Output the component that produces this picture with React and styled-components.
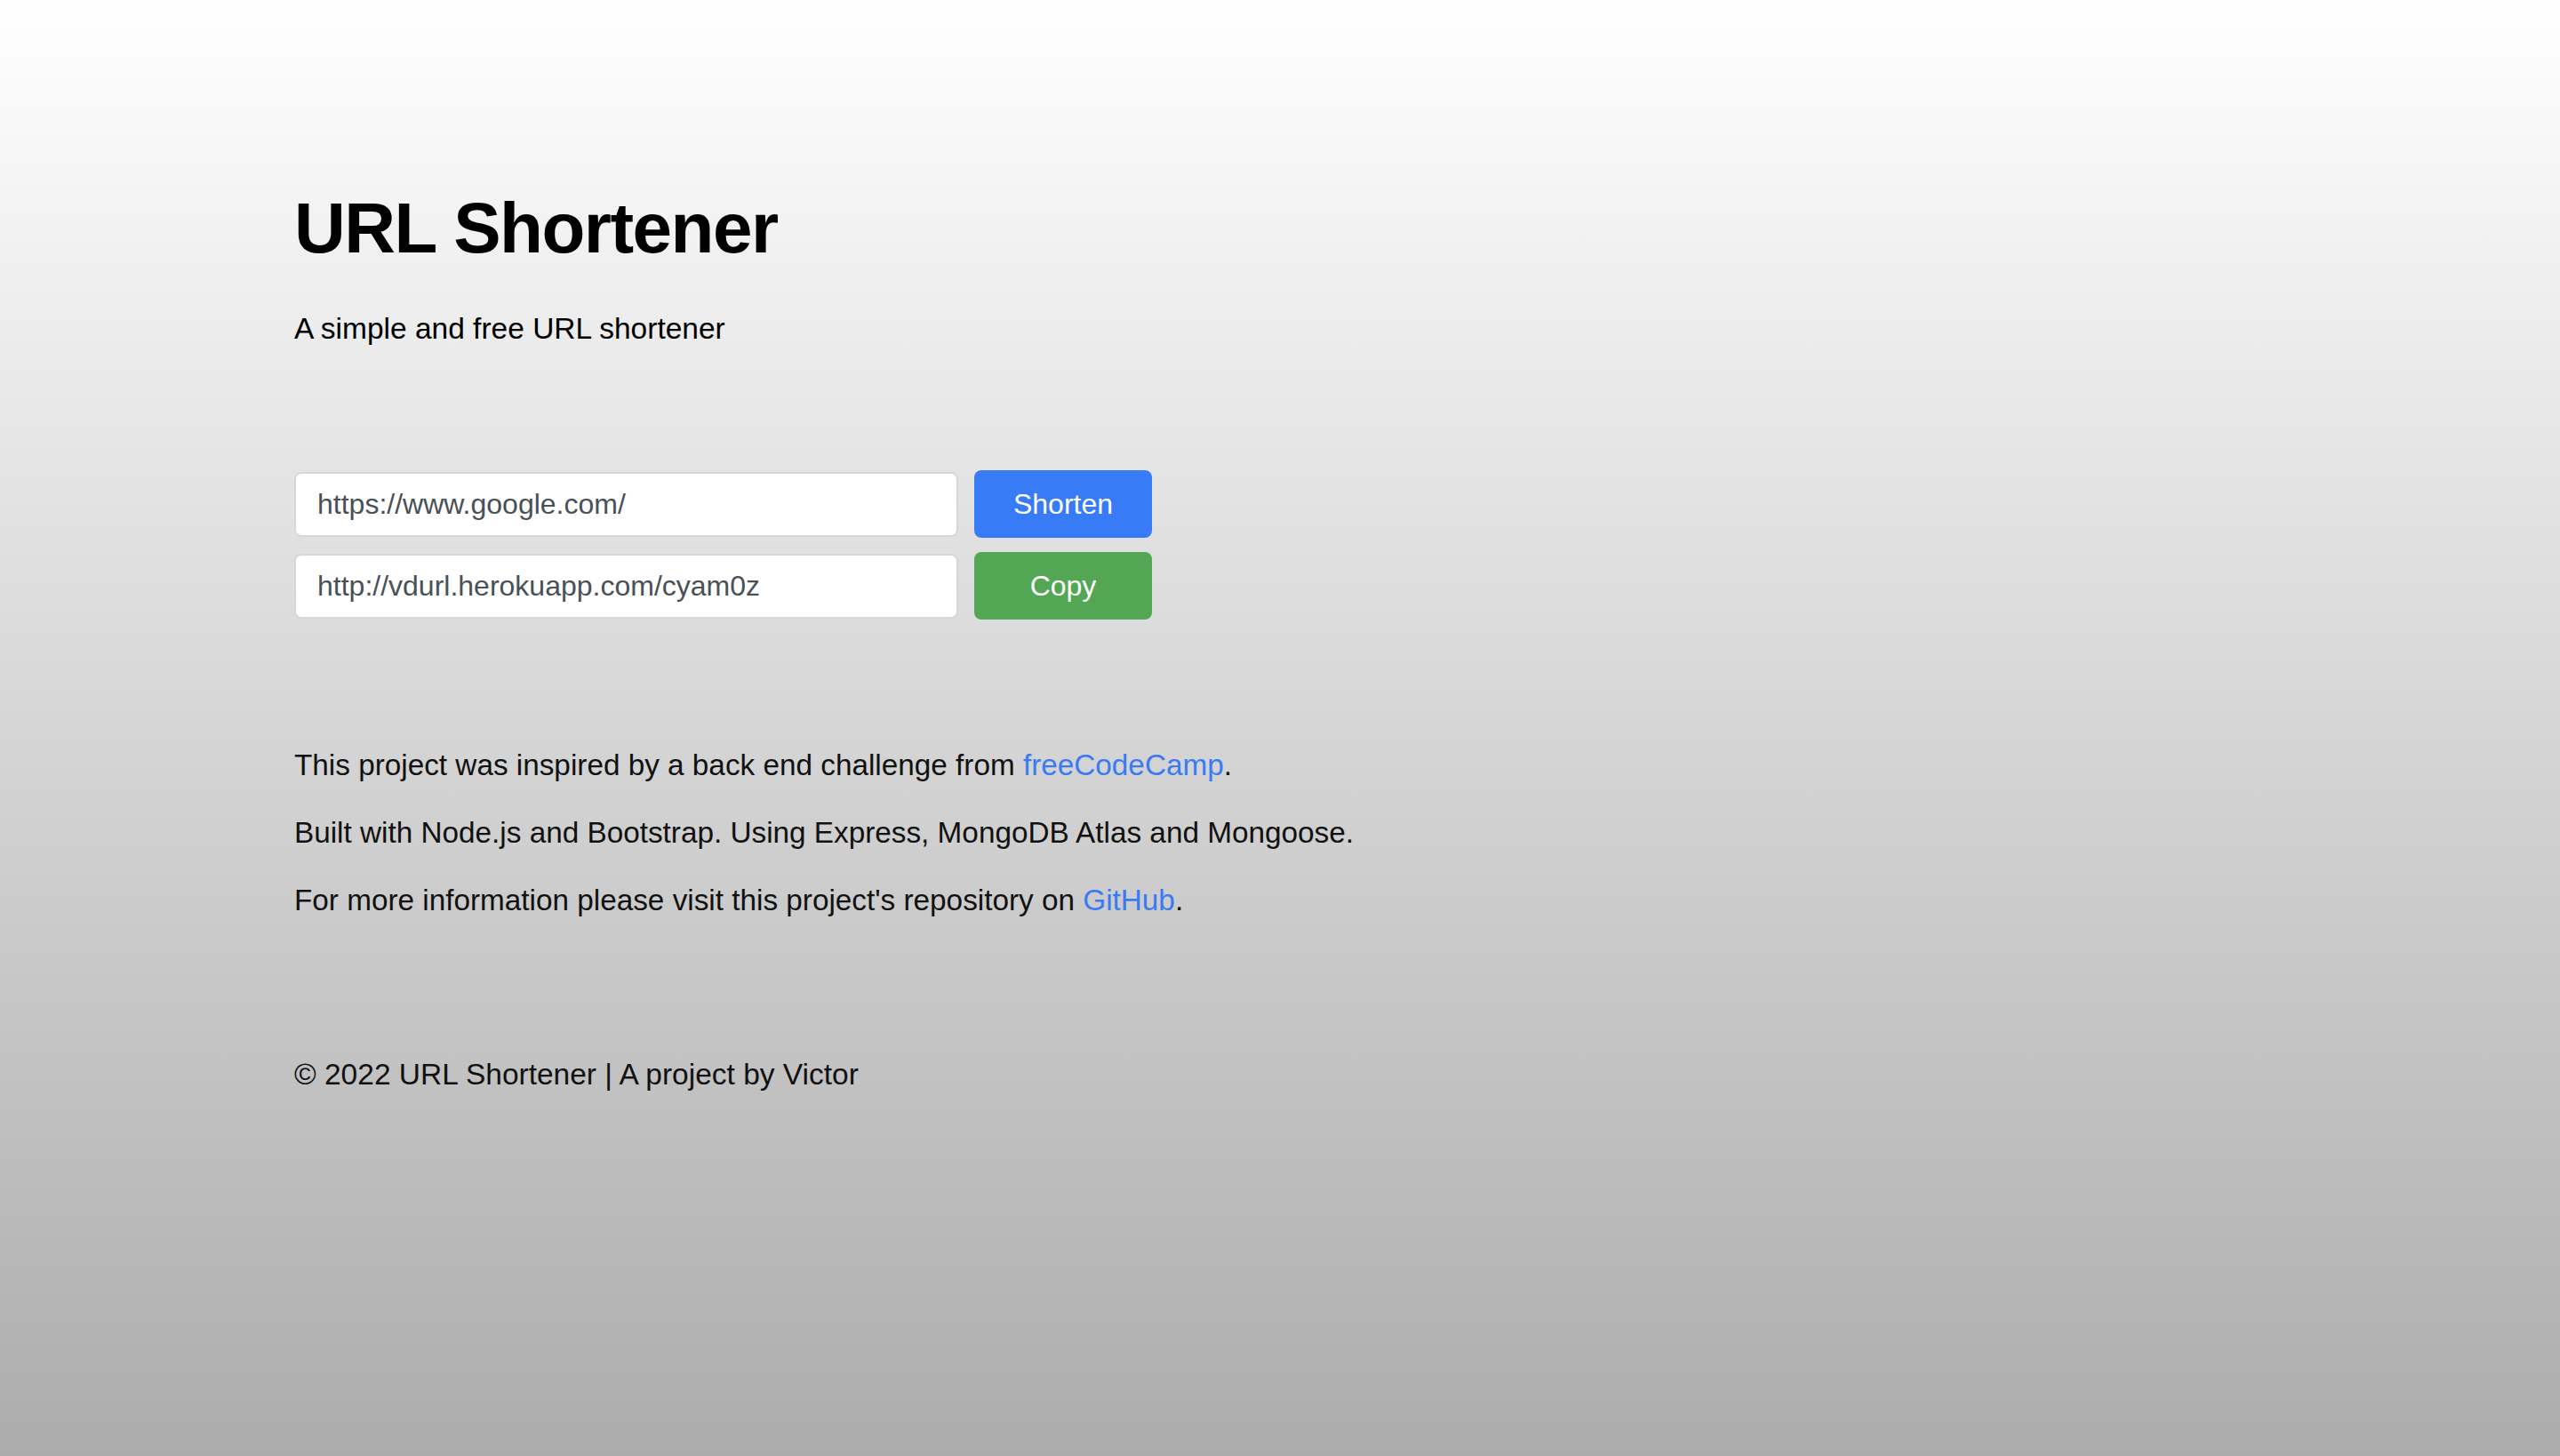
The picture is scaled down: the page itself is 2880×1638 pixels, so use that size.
import React from 'react';
import styled, { createGlobalStyle } from 'styled-components';

const GlobalStyle = createGlobalStyle`
  html, body {
    margin: 0;
    padding: 0;
  }
  body {
    min-height: 100vh;
    background: linear-gradient(to bottom, #ffffff 0%, #acacac 100%);
    font-family: 'Liberation Sans', Arial, sans-serif;
    color: #111;
  }
`;

const Page = styled.main`
  display: flex;
  flex-direction: column;
  align-items: flex-start;
  min-height: 100vh;
  box-sizing: border-box;
  padding: 209px 0 0 331px;
`;

const Header = styled.header`
  display: flex;
  flex-direction: column;
  gap: 45px;
`;

const Title = styled.h1`
  margin: 0;
  font-size: 80px;
  line-height: 96px;
  font-weight: 700;
  letter-spacing: -1.5px;
  color: #000;
`;

const Lead = styled.p`
  margin: 0;
  font-size: 33.5px;
  line-height: 40px;
  color: #000;
`;

const Form = styled.form`
  display: flex;
  flex-direction: column;
  gap: 16px;
  margin-top: 139px;
`;

const Row = styled.div`
  display: flex;
  align-items: center;
  gap: 18px;
  height: 76px;
`;

const Field = styled.input`
  box-sizing: border-box;
  width: 747px;
  height: 73px;
  padding: 0 24px;
  border: 2px solid #d4d8dd;
  border-radius: 8px;
  background: #fff;
  color: #495057;
  font-family: 'Liberation Sans', Arial, sans-serif;
  font-size: 32px;
  outline: none;
`;

const Button = styled.button`
  box-sizing: border-box;
  width: 200px;
  height: 76px;
  border: none;
  border-radius: 8px;
  background: ${({ $variant }) => ($variant === 'success' ? '#53a653' : '#387bf6')};
  color: #fff;
  font-family: 'Liberation Sans', Arial, sans-serif;
  font-size: 32px;
  cursor: pointer;
`;

const About = styled.section`
  display: flex;
  flex-direction: column;
  gap: 32px;
  margin-top: 142px;
`;

const Text = styled.p`
  margin: 0;
  font-size: 33.3px;
  line-height: 44px;
  color: #111;
`;

const Link = styled.a`
  color: #3a7bf5;
  text-decoration: none;
`;

const Footer = styled.footer`
  margin-top: 152px;
  font-size: 33.5px;
  line-height: 44px;
  color: #111;
`;

export default function App() {
  return (
    <>
      <GlobalStyle />
      <Page>
        <Header>
          <Title>URL Shortener</Title>
          <Lead>A simple and free URL shortener</Lead>
        </Header>

        <Form onSubmit={(e) => e.preventDefault()}>
          <Row>
            <Field type="text" readOnly value="https://www.google.com/" />
            <Button type="submit">Shorten</Button>
          </Row>
          <Row>
            <Field type="text" readOnly value="http://vdurl.herokuapp.com/cyam0z" />
            <Button type="button" $variant="success">Copy</Button>
          </Row>
        </Form>

        <About>
          <Text>
            This project was inspired by a back end challenge from{' '}
            <Link href="#">freeCodeCamp</Link>.
          </Text>
          <Text>Built with Node.js and Bootstrap. Using Express, MongoDB Atlas and Mongoose.</Text>
          <Text>
            For more information please visit this project's repository on{' '}
            <Link href="#">GitHub</Link>.
          </Text>
        </About>

        <Footer>© 2022 URL Shortener | A project by Victor</Footer>
      </Page>
    </>
  );
}
